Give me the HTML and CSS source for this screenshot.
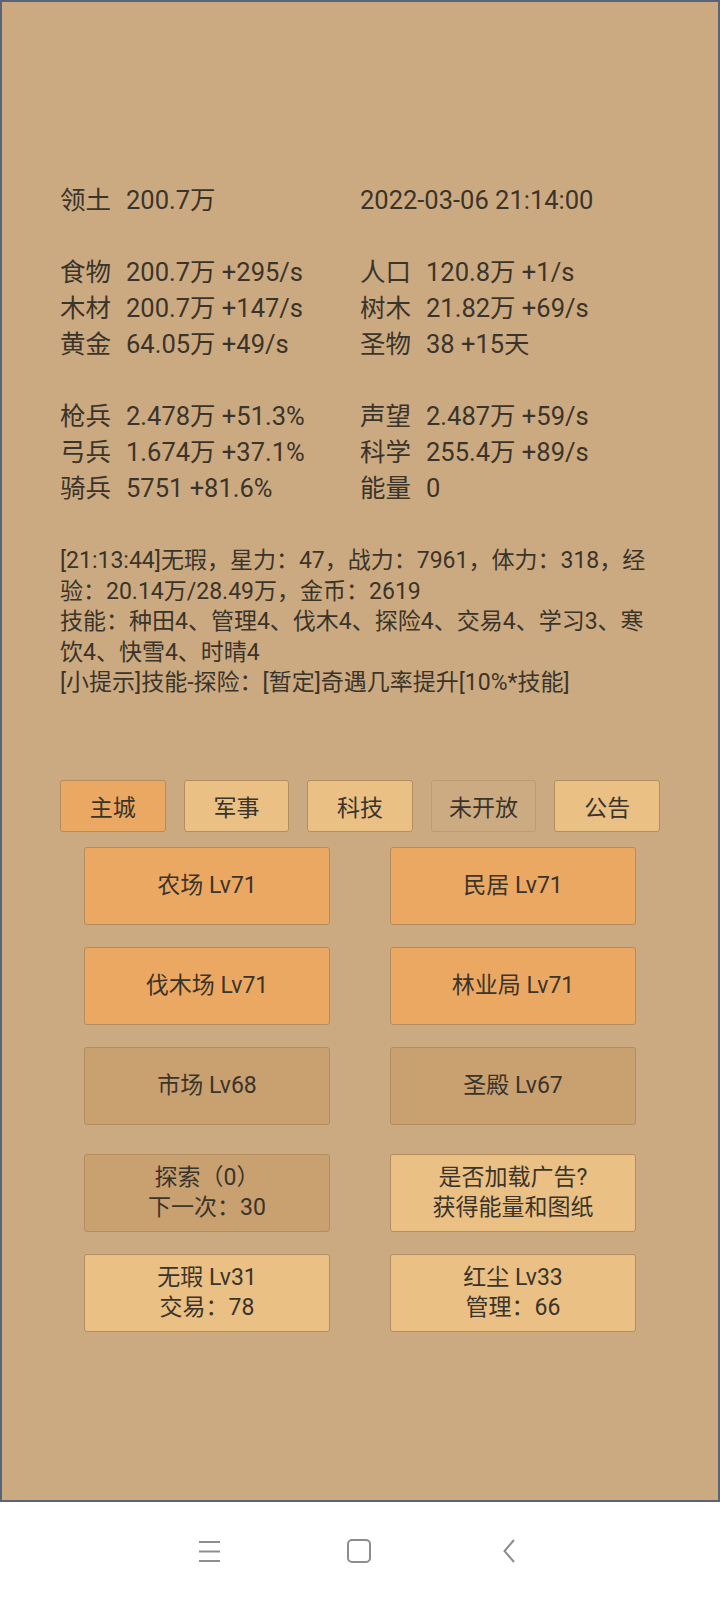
FILE: index.html
```html
<!DOCTYPE html>
<html lang="zh-CN">
<head>
<meta charset="UTF-8" />
<meta name="viewport" content="width=device-width, initial-scale=1" />
<title>领土</title>
<link rel="stylesheet" href="styles.css">
</head>
<body>
  <div class="game">
    <div class="stats">
      <div class="stat"><span class="name">领土</span>200.7万</div>
      <div class="stat">2022-03-06 21:14:00</div>
      <div class="blank"></div>
      <div class="stat"><span class="name">食物</span>200.7万 +295/s</div>
      <div class="stat"><span class="name">人口</span>120.8万 +1/s</div>
      <div class="stat"><span class="name">木材</span>200.7万 +147/s</div>
      <div class="stat"><span class="name">树木</span>21.82万 +69/s</div>
      <div class="stat"><span class="name">黄金</span>64.05万 +49/s</div>
      <div class="stat"><span class="name">圣物</span>38 +15天</div>
      <div class="blank"></div>
      <div class="stat"><span class="name">枪兵</span>2.478万 +51.3%</div>
      <div class="stat"><span class="name">声望</span>2.487万 +59/s</div>
      <div class="stat"><span class="name">弓兵</span>1.674万 +37.1%</div>
      <div class="stat"><span class="name">科学</span>255.4万 +89/s</div>
      <div class="stat"><span class="name">骑兵</span>5751 +81.6%</div>
      <div class="stat"><span class="name">能量</span>0</div>
    </div>

    <div class="log">
      <p>[21:13:44]无瑕，星力：47，战力：7961，体力：318，经验：20.14万/28.49万，金币：2619</p>
      <p>技能：种田4、管理4、伐木4、探险4、交易4、学习3、寒饮4、快雪4、时晴4</p>
      <p>[小提示]技能-探险：[暂定]奇遇几率提升[10%*技能]</p>
    </div>

    <div class="tabs">
      <button class="tab active">主城</button>
      <button class="tab">军事</button>
      <button class="tab">科技</button>
      <button class="tab locked">未开放</button>
      <button class="tab">公告</button>
    </div>

    <div class="buildings">
      <button class="btn hot">农场 Lv71</button>
      <button class="btn hot">民居 Lv71</button>
      <button class="btn hot">伐木场 Lv71</button>
      <button class="btn hot">林业局 Lv71</button>
      <button class="btn dim">市场 Lv68</button>
      <button class="btn dim">圣殿 Lv67</button>
    </div>

    <div class="actions">
      <button class="btn dim">探索（0）<br>下一次：30</button>
      <button class="btn light">是否加载广告?<br>获得能量和图纸</button>
      <button class="btn light">无瑕 Lv31<br>交易：78</button>
      <button class="btn light">红尘 Lv33<br>管理：66</button>
    </div>
  </div>

  <div class="navbar">
    <svg class="nav-icon" width="22" height="24" viewBox="0 0 22 24">
      <path d="M0 3h21M0 12.5h21M0 22h21" />
    </svg>
    <svg class="nav-icon" width="24" height="24" viewBox="0 0 24 24">
      <rect x="1" y="1" width="22" height="22" rx="4" />
    </svg>
    <svg class="nav-icon" width="24" height="24" viewBox="0 0 24 24">
      <path d="M17 1 L7.5 12 L17 23" />
    </svg>
  </div>
</body>
</html>
```

FILE: styles.css
```css
* {
  margin: 0; padding: 0; box-sizing: border-box;
}
body {
  width: 720px;
  height: 1600px;
  font-family: Roboto, "Noto Sans CJK SC", sans-serif;
  color: #3b342b;
  background: #fff;
  display: flex;
  flex-direction: column;
}
.game {
  height: 1502px;
  background: #cbaa81;
  border: 2px solid #5a6479;
  padding: 180px 58px 0 58px;
}
/* верхние показатели */
.stats {
  display: grid;
  grid-template-columns: 300px 1fr;
  font-size: 25.5px;
  line-height: 36px;
  white-space: nowrap;
}
.stats .blank {
  grid-column: 1 / 3;
  height: 36px;
}
.stats .name {
  display: inline-block;
  width: 66px;
}
.log {
  margin-top: 40px;
  font-size: 23px;
  line-height: 30.5px;
}
.tabs {
  margin-top: 81px;
  display: grid;
  grid-template-columns: repeat(5, 1fr);
  gap: 18px;
}
.tab,
.btn {
  font-family: Roboto, "Noto Sans CJK SC", sans-serif;
  font-size: 23px;
  color: #3b342b;
  border: 1.5px solid #b38d60;
  border-radius: 3px;
  background: #eac085;
}
.tab {
  height: 52px;
}
.tab.active {
  background: #eba862;
}
.tab.locked {
  background: #cdab82;
  border-color: #bd9a70;
}
.buildings,
.actions {
  display: grid;
  grid-template-columns: 246px 246px;
  justify-content: center;
  column-gap: 60px;
  row-gap: 22px;
}
.buildings {
  margin-top: 15px;
}
.actions {
  margin-top: 29px;
}
.btn {
  height: 78px;
  line-height: 30px;
}
.btn.hot {
  background: #eba862;
}
.btn.dim {
  background: #c9a070;
}
.btn.light {
  background: #eac085;
}
/* нижняя панель */
.navbar {
  flex: 1;
  display: flex;
  justify-content: center;
  align-items: center;
  gap: 126px;
  background: #fff;
}
.nav-icon {
  fill: none;
  stroke: #8d8d8d;
  stroke-width: 2;
}
```
